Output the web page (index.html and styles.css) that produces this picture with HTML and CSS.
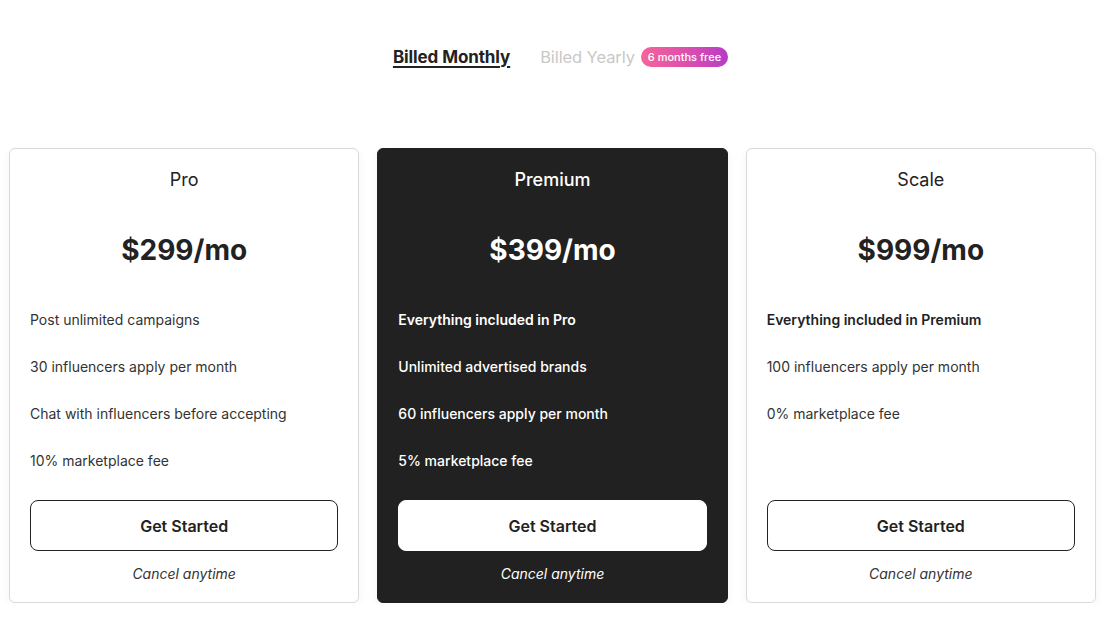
FILE: index.html
```html
<!DOCTYPE html>
<html>
<head>
<meta charset="utf-8">
<link rel="stylesheet" href="styles.css">
</head>
<body>
<div class="page">
  <div class="billing">
    <span class="opt active">Billed Monthly</span>
    <span class="opt-group">
      <span class="opt">Billed Yearly</span>
      <span class="badge">6 months free</span>
    </span>
  </div>
  <div class="plans">
    <div class="card">
      <div class="name">Pro</div>
      <div class="price">$299/mo</div>
      <ul class="features">
        <li>Post unlimited campaigns</li>
        <li>30 influencers apply per month</li>
        <li>Chat with influencers before accepting</li>
        <li>10% marketplace fee</li>
      </ul>
      <button class="btn">Get Started</button>
      <div class="cancel">Cancel anytime</div>
    </div>
    <div class="card dark">
      <div class="name">Premium</div>
      <div class="price">$399/mo</div>
      <ul class="features">
        <li class="strong">Everything included in Pro</li>
        <li>Unlimited advertised brands</li>
        <li>60 influencers apply per month</li>
        <li>5% marketplace fee</li>
      </ul>
      <button class="btn">Get Started</button>
      <div class="cancel">Cancel anytime</div>
    </div>
    <div class="card">
      <div class="name">Scale</div>
      <div class="price">$999/mo</div>
      <ul class="features">
        <li class="strong">Everything included in Premium</li>
        <li>100 influencers apply per month</li>
        <li>0% marketplace fee</li>
      </ul>
      <button class="btn">Get Started</button>
      <div class="cancel">Cancel anytime</div>
    </div>
  </div>
</div>
</body>
</html>
```
FILE: styles.css
```css
* { box-sizing: border-box; }
html, body {
  margin: 0;
  padding: 0;
  background: #ffffff;
  font-family: Inter, "Noto Sans", sans-serif;
  color: #222222;
}
.page {
  padding: 45px 8px 0 9px;
}
.billing {
  display: flex;
  justify-content: center;
  align-items: center;
  gap: 30px;
  height: 24px;
  padding-left: 16px;
}
.opt {
  font-size: 16.5px;
  color: #c8c8c8;
  letter-spacing: -0.1px;
}
.opt.active {
  font-size: 17px;
  font-weight: 700;
  color: #222222;
  text-decoration: underline;
  text-underline-offset: 3px;
  text-decoration-thickness: 1.5px;
}
.opt-group {
  display: flex;
  align-items: center;
  gap: 6px;
}
.badge {
  display: inline-flex;
  align-items: center;
  height: 20px;
  padding: 0 7px;
  border-radius: 10px;
  background: linear-gradient(90deg, #f4649a 0%, #dc4eae 55%, #b63cc6 100%);
  color: #ffffff;
  font-size: 11px;
  font-weight: 500;
}
.plans {
  display: grid;
  grid-template-columns: repeat(3, 1fr);
  gap: 18px;
  margin-top: 79px;
}
.card {
  display: flex;
  flex-direction: column;
  height: 455px;
  padding: 19px 20px 18px;
  background: #ffffff;
  border: 1px solid #dadada;
  border-radius: 6px;
  box-shadow: 0 3px 10px rgba(0, 0, 0, 0.05);
}
.card.dark {
  background: #212121;
  border-color: #212121;
  color: #ffffff;
}
.name {
  text-align: center;
  font-size: 18px;
  line-height: 24px;
  font-weight: 400;
}
.dark .name { font-weight: 500; }
.price {
  text-align: center;
  font-size: 28px;
  line-height: 36px;
  font-weight: 700;
  margin-top: 40px;
}
.features {
  list-style: none;
  margin: 42px 0 0;
  padding: 0;
  flex: 1;
  display: flex;
  flex-direction: column;
  gap: 27px;
}
.features li {
  font-size: 14px;
  line-height: 20px;
  color: #333333;
}
.dark .features li {
  color: #ffffff;
  font-weight: 500;
}
.features li.strong {
  font-weight: 600;
  color: #222222;
}
.dark .features li.strong { color: #ffffff; }
.btn {
  display: block;
  width: 100%;
  height: 51px;
  background: #ffffff;
  border: 1px solid #222222;
  border-radius: 8px;
  font-family: Inter, "Noto Sans", sans-serif;
  font-size: 16px;
  font-weight: 600;
  color: #222222;
  cursor: pointer;
}
.dark .btn { border-color: #ffffff; }
.cancel {
  margin-top: 13px;
  text-align: center;
  font-size: 14px;
  line-height: 20px;
  font-style: italic;
  color: #333333;
}
.dark .cancel { color: #ffffff; }
```
